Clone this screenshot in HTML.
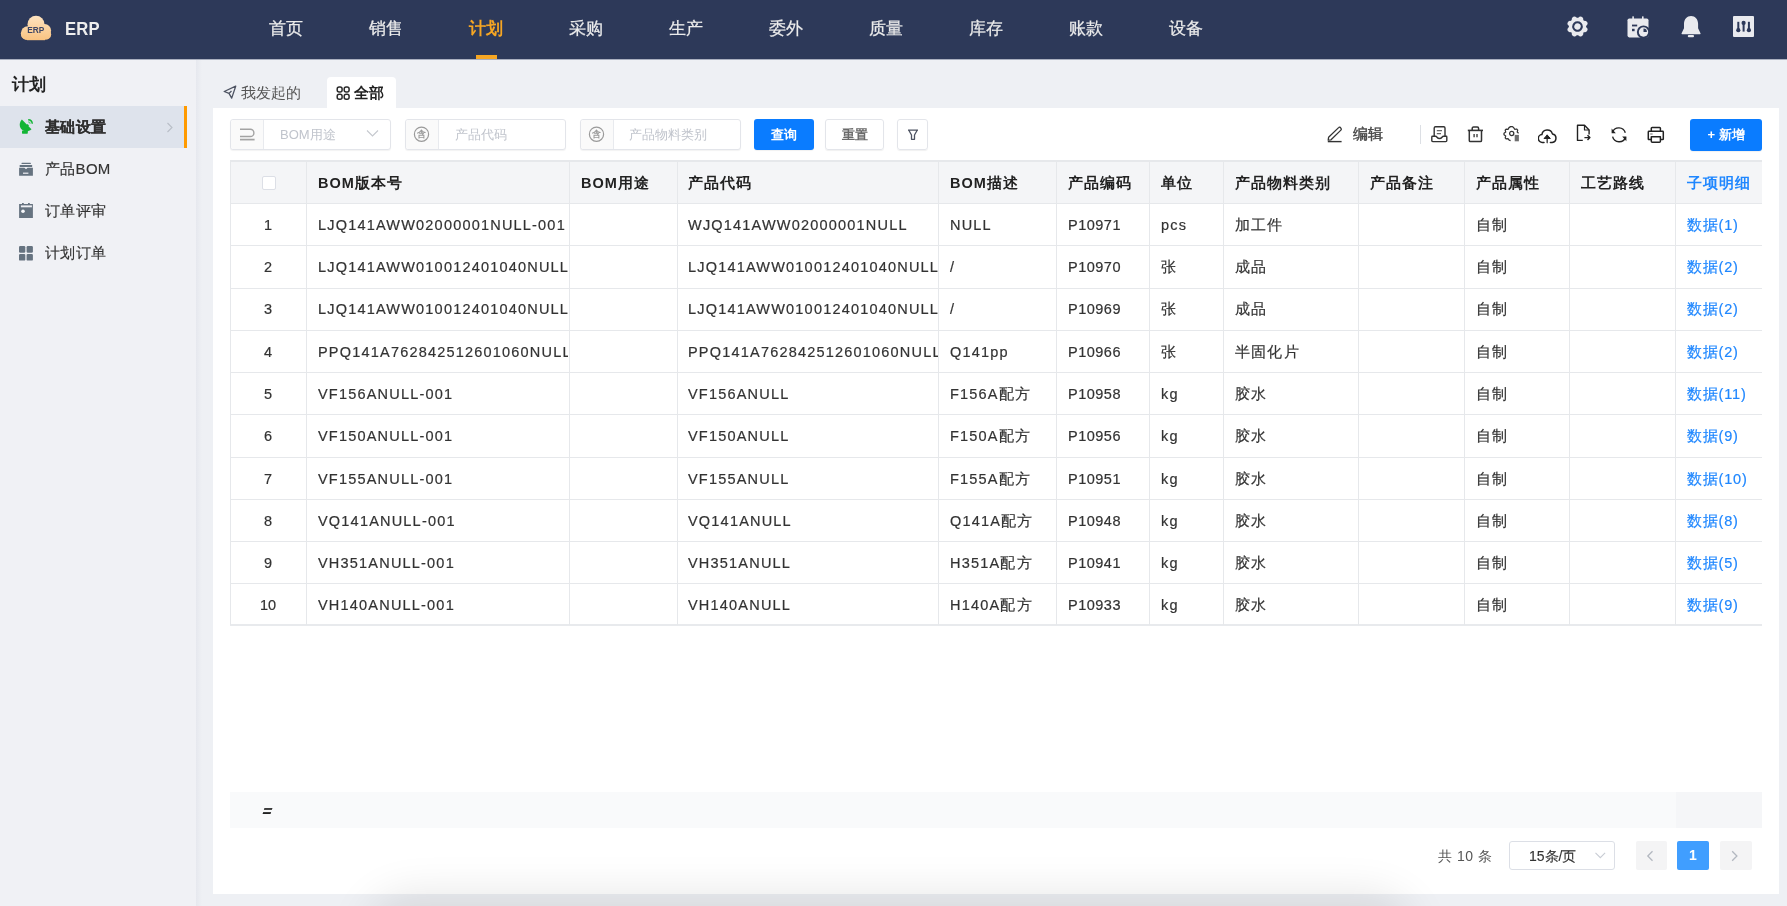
<!DOCTYPE html>
<html><head><meta charset="utf-8">
<style>
*{box-sizing:border-box;margin:0;padding:0}
html,body{width:1787px;height:906px;overflow:hidden}
body{position:relative;background:#eef0f4;will-change:transform;font-family:"Liberation Sans",sans-serif;color:#333}
.abs{position:absolute}
#hdr{left:0;top:0;width:1787px;height:59px;background:#2d3959}
.nav{position:absolute;top:18px;font-size:16.8px;line-height:22px;color:#ececec;white-space:nowrap;-webkit-text-stroke:0.25px #ececec}
.nav.on{color:#f6a623;font-weight:bold;-webkit-text-stroke:0}
#side{left:0;top:59px;width:196px;height:847px;background:#f0f1f5}
.sitem{position:absolute;left:0;width:196px;height:42px}
.sitem .t{position:absolute;left:45px;top:12px;font-size:15px;line-height:18px;color:#333;white-space:nowrap;letter-spacing:0.3px;-webkit-text-stroke:0.15px #333}
#card{left:213px;top:108px;width:1566px;height:786px;background:#fff}
.fbox{position:absolute;top:119px;height:31px;border:1px solid #e3e5ea;border-radius:3px;background:#fff;box-shadow:0 1px 1px rgba(0,0,0,0.05)}
.fbox .pre{position:absolute;left:0;top:0;width:33px;height:29px;background:#fafafa;border-right:1px solid #e8eaee;border-radius:3px 0 0 3px}
.fbox .ph{position:absolute;top:7px;font-size:13px;line-height:15px;color:#c0c4cc;white-space:nowrap}
.btn{position:absolute;top:119px;height:31px;border-radius:3px;font-size:13px;line-height:31px;box-shadow:0 1px 1px rgba(0,0,0,0.06);text-align:center;font-weight:bold;white-space:nowrap}
.hl{position:absolute;left:230px;width:1532px;height:1px;background:#e6e8eb}
.vl{position:absolute;width:1px;background:#e6e8eb}
.c{position:absolute;font-size:14.5px;line-height:18px;color:#333;white-space:nowrap;letter-spacing:1.2px;-webkit-text-stroke:0.2px #333}
.h{position:absolute;top:174px;font-size:14.5px;line-height:18px;color:#222;font-weight:bold;white-space:nowrap;letter-spacing:1px}
.lk{color:#1f87ff}
.clip{overflow:hidden}
.c.lk{-webkit-text-stroke:0.2px #1f87ff;letter-spacing:0.8px}
.ico{position:absolute}
</style></head><body>
<!-- header -->
<div id="hdr" class="abs">
  <svg class="ico" style="left:20px;top:15px" width="33" height="27" viewBox="0 0 33 27">
    <defs><linearGradient id="cg" gradientUnits="userSpaceOnUse" x1="0" y1="0" x2="0" y2="26"><stop offset="0" stop-color="#fde4c2"/><stop offset="1" stop-color="#f9c27f"/></linearGradient></defs>
    <g fill="url(#cg)">
      <circle cx="16" cy="9.3" r="8.5"/>
      <circle cx="24.6" cy="15.6" r="6.5"/>
      <circle cx="7.8" cy="18.2" r="6.9"/>
      <rect x="1" y="14" width="30.2" height="10.8" rx="6.3"/>
      <rect x="7" y="12" width="18" height="13.2"/>
    </g>
    <text x="15.8" y="18.2" font-family="Liberation Sans" font-weight="bold" font-size="8.3" fill="#3c4565" text-anchor="middle" textLength="17" lengthAdjust="spacingAndGlyphs">ERP</text>
  </svg>
  <div class="abs" style="left:65px;top:18px;font-size:18.5px;line-height:21px;font-weight:bold;color:#eee;letter-spacing:0.2px;transform:scaleX(0.9);transform-origin:0 0">ERP</div>
  <div class="nav" style="left:269px">首页</div>
  <div class="nav" style="left:369px">销售</div>
  <div class="nav on" style="left:469px">计划</div>
  <div class="nav" style="left:569px">采购</div>
  <div class="nav" style="left:669px">生产</div>
  <div class="nav" style="left:769px">委外</div>
  <div class="nav" style="left:869px">质量</div>
  <div class="nav" style="left:969px">库存</div>
  <div class="nav" style="left:1069px">账款</div>
  <div class="nav" style="left:1169px">设备</div>

  <svg class="ico" style="left:1567px;top:16px" width="21" height="21" viewBox="0 0 21 21" fill="#e9eaee">
    <g transform="translate(10.5 10.5) rotate(22.5)">
      <circle r="8.6"/>
      <circle cx="0" cy="-7.9" r="2.7"/><circle cx="5.6" cy="-5.6" r="2.7"/><circle cx="7.9" cy="0" r="2.7"/><circle cx="5.6" cy="5.6" r="2.7"/>
      <circle cx="0" cy="7.9" r="2.7"/><circle cx="-5.6" cy="5.6" r="2.7"/><circle cx="-7.9" cy="0" r="2.7"/><circle cx="-5.6" cy="-5.6" r="2.7"/>
      <circle r="5.3" fill="#2d3959"/><circle r="3.2"/>
    </g>
  </svg>
  <svg class="ico" style="left:1627px;top:16px" width="23" height="22" viewBox="0 0 23 22">
    <rect x="0.5" y="2.4" width="21" height="19" rx="1.8" fill="#e9eaee"/>
    <rect x="5.3" y="0.2" width="1.6" height="4" rx="0.6" fill="#e9eaee"/>
    <rect x="15" y="0.2" width="1.6" height="4" rx="0.6" fill="#e9eaee"/>
    <rect x="5" y="8.6" width="5.2" height="1.8" fill="#2d3959"/>
    <rect x="5" y="12.8" width="2.6" height="2.4" fill="#2d3959"/>
    <circle cx="16.5" cy="16" r="6.6" fill="#2d3959"/>
    <circle cx="16.5" cy="16" r="4.7" fill="#e9eaee"/>
    <path d="M16.5 16 L16.5 12.6 A3.4 3.4 0 0 1 19.9 16 Z" fill="#2d3959"/>
  </svg>
  <svg class="ico" style="left:1681px;top:16px" width="21" height="22" viewBox="0 0 21 22" fill="#e9eaee">
    <path d="M0.6 17.3 Q0.2 18.2 1.2 18.2 L18.9 18.2 Q19.9 18.2 19.5 17.3 L17.1 12.2 L17.1 7.8 C17.1 3.3 14.1 0 10.05 0 C6 0 3 3.3 3 7.8 L3 12.2 Z"/>
    <rect x="6.8" y="18.9" width="6.2" height="2.3" rx="1"/>
  </svg>
  <svg class="ico" style="left:1733px;top:16px" width="21" height="21" viewBox="0 0 21 21">
    <rect x="0" y="0" width="21" height="21" rx="1" fill="#e9eaee"/>
    <g fill="#2d3959">
      <rect x="4.3" y="5.8" width="2" height="9.8"/><circle cx="5.3" cy="14.2" r="2.1"/>
      <rect x="9.6" y="5.8" width="2" height="9.8"/><circle cx="10.6" cy="6.9" r="2.1"/>
      <rect x="14.9" y="5.8" width="2" height="9.8"/><circle cx="15.9" cy="14.2" r="2.1"/>
    </g>
  </svg>
  <div class="abs" style="left:476px;top:55px;width:21px;height:4px;background:#f6a623"></div>
</div>

<div class="abs" style="left:0;top:59px;width:1787px;height:1px;background:#a9afbf;z-index:5"></div>
<!-- sidebar -->
<div id="side" class="abs">
  <div class="abs" style="left:12px;top:16px;font-size:17px;line-height:20px;font-weight:bold;color:#222">计划</div>
  <div class="sitem" style="top:47px;width:187px;background:#dee3ec">
    <div class="t" style="font-weight:bold;color:#222">基础设置</div>
    <div class="abs" style="left:184px;top:0;width:3px;height:42px;background:#ff9a00"></div>
  </div>

  <svg class="ico" style="left:19px;top:59px" width="15" height="17" viewBox="0 0 15 17" fill="#12b534">
    <path d="M2.9 1.4 C-0.2 4.5 0 10 3.8 12.3 C6.5 13.9 9.8 13.4 12.5 11.2 Z"/>
    <path d="M6.8 7.8 L8.6 6 L10 7.4 L8.2 9.2 Z"/>
    <rect x="3" y="12.6" width="5.8" height="3.1" rx="0.6"/>
    <path d="M9.2 1 A5 5 0 0 1 14 5.8 L12.6 5.8 A3.6 3.6 0 0 0 9.2 2.4 Z"/>
    <path d="M9.2 3.3 A2.6 2.6 0 0 1 11.8 5.8 L10.6 5.8 A1.4 1.4 0 0 0 9.2 4.5 Z" opacity="0.6"/>
  </svg>
  <svg class="ico" style="left:19px;top:103px" width="14" height="14" viewBox="0 0 14 14" fill="#667380">
    <rect x="2.5" y="0.7" width="9.4" height="1.4" rx="0.5"/>
    <rect x="0.6" y="2.9" width="12.6" height="2" rx="0.4"/>
    <path d="M0.1 5.7 L5.4 5.7 L7 7.2 L8.6 5.7 L13.9 5.7 L13.9 13.7 L0.1 13.7 Z"/>
    <rect x="4" y="10.6" width="5.4" height="1.2" fill="#f0f1f5"/>
  </svg>
  <svg class="ico" style="left:19px;top:144px" width="14" height="15" viewBox="0 0 14 15" fill="#667380">
    <path d="M0.1 0.9 L3 0.9 L3 0 L4.8 0 L4.8 0.9 L9 0.9 L9 0 L10.8 0 L10.8 0.9 L13.9 0.9 L13.9 14.9 L0.1 14.9 Z"/>
    <rect x="1.9" y="2.4" width="11" height="1.9" fill="#f0f1f5"/>
    <circle cx="4" cy="8.3" r="1.8" fill="#f8f9fb"/>
  </svg>
  <svg class="ico" style="left:19px;top:187px" width="14" height="15" viewBox="0 0 14 15" fill="#667380">
    <rect x="0" y="0" width="6.3" height="6.7" rx="1.2"/><rect x="7.6" y="0" width="6.3" height="6.7" rx="1.2"/>
    <rect x="0" y="7.9" width="6.3" height="6.7" rx="1.2"/><rect x="7.6" y="7.9" width="6.3" height="6.7" rx="1.2"/>
  </svg>
  <svg class="ico" style="left:166px;top:63px" width="8" height="11" viewBox="0 0 8 11"><path d="M1.5 1 L6 5.5 L1.5 10" fill="none" stroke="#b9bec7" stroke-width="1.1"/></svg>
  <div class="sitem" style="top:89px"><div class="t">产品BOM</div></div>
  <div class="sitem" style="top:131px"><div class="t">订单评审</div></div>
  <div class="sitem" style="top:173px"><div class="t">计划订单</div></div>
</div>
<div class="abs" style="left:196px;top:59px;width:6px;height:847px;background:linear-gradient(to right,#e6e8ee,#eef0f4)"></div>

<!-- tabs -->
<div class="abs" style="left:327px;top:77px;width:69px;height:32px;background:#fff;border-radius:4px 4px 0 0"></div>

<svg class="ico" style="left:223px;top:85px" width="15" height="15" viewBox="0 0 15 15" fill="none" stroke="#4d5362" stroke-width="1.3" stroke-linejoin="round">
  <path d="M12.7 1.2 L1.2 6.5 L6 8.4 L8.7 13.1 Z"/><path d="M6 8.4 L8.5 6"/>
</svg>
<svg class="ico" style="left:336px;top:86px" width="15" height="15" viewBox="0 0 15 15" fill="none" stroke="#2a2a2a" stroke-width="1.5">
  <rect x="1.2" y="1.1" width="4.9" height="5" rx="2"/><rect x="8.2" y="1.1" width="4.9" height="5" rx="2"/>
  <rect x="1.2" y="8.2" width="4.9" height="5" rx="2"/><rect x="8.2" y="8.2" width="4.9" height="5" rx="2"/>
</svg>
<div class="abs" style="left:241px;top:84px;font-size:14.5px;line-height:18px;color:#555;white-space:nowrap">我发起的</div>
<div class="abs" style="left:354px;top:84px;font-size:14.5px;line-height:18px;color:#222;font-weight:bold;white-space:nowrap">全部</div>

<!-- card -->
<div id="card" class="abs"></div>

<!-- filters -->
<div class="fbox" style="left:230px;width:161px"><div class="pre"></div><div class="ph" style="left:49px">BOM用途</div></div>
<div class="fbox" style="left:405px;width:161px"><div class="pre"></div><div class="ph" style="left:49px">产品代码</div></div>
<div class="fbox" style="left:580px;width:161px"><div class="pre"></div><div class="ph" style="left:48px">产品物料类别</div></div>

<svg class="ico" style="left:239px;top:127px" width="17" height="15" viewBox="0 0 17 15" fill="none" stroke="#a3a3a3" stroke-width="1.4">
  <path d="M1 2.3 L11.3 2.3 A3.6 3.6 0 0 1 11.3 9.5 L1 9.5"/><path d="M1 12.6 L15.6 12.6" stroke-width="1.7"/>
</svg>
<svg class="ico" style="left:413px;top:126px" width="17" height="17" viewBox="0 0 17 17">
  <circle cx="8.5" cy="8.2" r="7.1" fill="none" stroke="#9a9a9a" stroke-width="1.2"/>
  <text x="8.5" y="11.4" font-size="8.5" font-weight="bold" fill="#9a9a9a" text-anchor="middle" font-family="Liberation Sans">含</text>
</svg>
<svg class="ico" style="left:588px;top:126px" width="17" height="17" viewBox="0 0 17 17">
  <circle cx="8.5" cy="8.2" r="7.1" fill="none" stroke="#9a9a9a" stroke-width="1.2"/>
  <text x="8.5" y="11.4" font-size="8.5" font-weight="bold" fill="#9a9a9a" text-anchor="middle" font-family="Liberation Sans">含</text>
</svg>
<svg class="ico" style="left:366px;top:129px" width="13" height="9" viewBox="0 0 13 9" fill="none" stroke="#c5c8ce" stroke-width="1.1"><path d="M1 1.5 L6.5 7 L12 1.5"/></svg>
<svg class="ico" style="left:907px;top:129px" width="12" height="12" viewBox="0 0 12 12" fill="none" stroke="#4d5362" stroke-width="1.3" stroke-linejoin="round">
  <path d="M1 1.2 L11 1.2 M1.8 1.2 L4.5 6 L4.5 10.3 L7.5 10.3 L7.5 6 L10.2 1.2"/>
</svg>
<div class="btn" style="left:754px;width:60px;background:#0a7cff;color:#fff">查询</div>
<div class="btn" style="left:825px;width:59px;border:1px solid #e3e5ea;color:#6a6a6a;line-height:30px">重置</div>
<div class="btn" style="left:897px;width:31px;border:1px solid #e3e5ea"></div>

<!-- toolbar right -->
<div class="abs" style="left:1353px;top:125px;font-size:15px;line-height:18px;color:#4a4a4a;white-space:nowrap;-webkit-text-stroke:0.45px #4a4a4a">编辑</div>
<div class="abs" style="left:1420px;top:125px;width:1px;height:19px;background:#dcdfe4"></div>

<svg class="ico" style="left:1327px;top:126px" width="17" height="17" viewBox="0 0 17 17" fill="none" stroke="#333" stroke-width="1.3" stroke-linejoin="round">
  <path d="M1.6 11.3 L11.6 1.6 A1.2 1.2 0 0 1 13.6 1.9 L14 2.4 A1.2 1.2 0 0 1 13.9 4.1 L4 13.8 L1.2 14.1 Z"/>
  <path d="M0.8 15.6 L14.6 15.6" stroke-width="1.4"/>
</svg>
<svg class="ico" style="left:1431px;top:126px" width="17" height="17" viewBox="0 0 17 17" fill="none" stroke="#333" stroke-width="1.4" stroke-linejoin="round">
  <path d="M3.2 10 L3.2 2 A1.3 1.3 0 0 1 4.5 0.8 L12.8 0.8 A1.3 1.3 0 0 1 14 2 L14 10"/>
  <path d="M5.8 4.6 L11 4.6 M5.8 7.6 L10 7.6" stroke="#666" stroke-width="1.2"/>
  <path d="M1.5 10.3 L4.4 10.3 Q5.3 10.3 6 11.2 Q7 12.5 8.5 12.5 Q10 12.5 11 11.2 Q11.7 10.3 12.6 10.3 L15.3 10.3 Q15.8 10.3 15.8 11 L15.8 14.6 Q15.8 15.6 14.8 15.6 L1.8 15.6 Q0.8 15.6 0.8 14.6 L0.8 11 Q0.8 10.3 1.5 10.3 Z"/>
</svg>
<svg class="ico" style="left:1467px;top:126px" width="17" height="17" viewBox="0 0 17 17" fill="none" stroke="#333" stroke-width="1.5" stroke-linejoin="round">
  <path d="M5.2 4.2 L5.2 2.4 Q5.2 1.1 6.5 1.1 L10.3 1.1 Q11.6 1.1 11.6 2.4 L11.6 4.2"/>
  <path d="M0.8 4.4 L16 4.4" stroke-width="1.6"/>
  <path d="M2.3 4.4 L2.3 14.5 Q2.3 15.6 3.4 15.6 L13.4 15.6 Q14.5 15.6 14.5 14.5 L14.5 4.4"/>
  <path d="M7.1 8 L7.1 11.3 M10 8 L10 11.3" stroke-width="1.3"/>
</svg>
<svg class="ico" style="left:1503px;top:125px" width="17" height="17" viewBox="0 0 17 17" fill="none" stroke="#333" stroke-width="1.25" stroke-linejoin="round">
  <path d="M7.6 15.6 L6.2 15.2 L5 13.6 L3.1 13.9 L2.2 12.8 L2.7 10.9 L1 9.8 L1 8.2 L2.7 7.1 L2.2 5.2 L3.1 4.1 L5 4.4 L6 2.6 L7.6 1.6 L9.2 1.6 L10.6 2.6 L11.9 4.3 L13.8 4 L14.7 5.2 L14.2 7.1 L15.6 8.2"/>
  <circle cx="8.7" cy="8.5" r="2.1"/>
  <rect x="11.7" y="9.9" width="4.2" height="6.4" fill="#6e6e6e" stroke="none"/>
</svg>
<svg class="ico" style="left:1538px;top:127px" width="19" height="17" viewBox="0 0 19 17" fill="none" stroke="#222" stroke-width="1.5" stroke-linejoin="round" stroke-linecap="round">
  <path d="M6 15.4 L4.6 15.4 A3.9 3.9 0 0 1 3.9 7.6 A5.4 5.4 0 0 1 14.4 6.9 A4.3 4.3 0 0 1 14.2 15.4 L12.4 15.4"/>
  <path d="M9.2 15.6 L9.2 8.3" stroke="#555" stroke-width="1.6"/>
  <path d="M6.3 11.2 L9.2 8 L12.1 11.2 Z" fill="#222" stroke-width="1"/>
</svg>
<svg class="ico" style="left:1576px;top:124px" width="16" height="18" viewBox="0 0 16 18" fill="none" stroke="#222" stroke-width="1.4" stroke-linejoin="round">
  <path d="M13.1 10.4 L13.1 6 L8.5 1.2 L1.5 1.2 L1.5 16.4 L6.8 16.4"/>
  <path d="M8.5 1.2 L8.5 6 L13.1 6" stroke-width="1.2"/>
  <path d="M8.4 13.6 L13.8 13.6 M11.5 11.2 L13.9 13.6 L11.5 16" stroke-width="1.4"/>
</svg>
<svg class="ico" style="left:1610px;top:126px" width="18" height="18" viewBox="0 0 18 18" fill="none" stroke="#222" stroke-width="1.4">
  <path d="M2.4 6.2 A6.8 6.8 0 0 1 15.3 6.8"/>
  <path d="M15.6 11.2 A6.8 6.8 0 0 1 2.6 10.6"/>
  <path d="M1.6 2.6 L1.6 7.2 L5.8 7.2 Z" fill="#222" stroke="none"/>
  <path d="M16.4 15.2 L16.4 10.6 L12.2 10.6 Z" fill="#222" stroke="none"/>
</svg>
<svg class="ico" style="left:1647px;top:126px" width="18" height="18" viewBox="0 0 18 18" fill="none" stroke="#222" stroke-width="1.5" stroke-linejoin="round">
  <path d="M4.3 5.2 L4.3 2.2 Q4.3 1.4 5.1 1.4 L12.6 1.4 Q13.4 1.4 13.4 2.2 L13.4 5.2"/>
  <path d="M4.3 13.6 L2 13.6 Q1.3 13.6 1.3 12.9 L1.3 6 Q1.3 5.3 2 5.3 L15.6 5.3 Q16.3 5.3 16.3 6 L16.3 12.9 Q16.3 13.6 15.6 13.6 L13.4 13.6"/>
  <path d="M4.3 10.7 L13.4 10.7 L13.4 15.3 Q13.4 16.3 12.4 16.3 L5.3 16.3 Q4.3 16.3 4.3 15.3 Z"/>
  <path d="M3.2 8 L5.6 8" stroke-width="1.1" stroke="#777"/>
</svg>
<div class="btn" style="left:1690px;width:72px;top:119px;height:32px;background:#0a7cff;color:#fff;line-height:31px">+ 新增</div>

<!-- table -->
<div class="abs" style="left:230px;top:161px;width:1532px;height:42px;background:#f4f5f7"></div>
<div class="hl" style="top:160px;height:2px"></div>
<div class="hl" style="top:203px"></div>
<div class="hl" style="top:245px"></div>
<div class="hl" style="top:288px"></div>
<div class="hl" style="top:330px"></div>
<div class="hl" style="top:372px"></div>
<div class="hl" style="top:414px"></div>
<div class="hl" style="top:457px"></div>
<div class="hl" style="top:499px"></div>
<div class="hl" style="top:541px"></div>
<div class="hl" style="top:583px"></div>
<div class="hl" style="top:624px;height:2px;background:#e8eaed"></div>
<div class="vl" style="left:230px;top:160px;height:465px"></div>
<div class="vl" style="left:306px;top:160px;height:465px"></div>
<div class="vl" style="left:569px;top:160px;height:465px"></div>
<div class="vl" style="left:677px;top:160px;height:465px"></div>
<div class="vl" style="left:938px;top:160px;height:465px"></div>
<div class="vl" style="left:1056px;top:160px;height:465px"></div>
<div class="vl" style="left:1149px;top:160px;height:465px"></div>
<div class="vl" style="left:1223px;top:160px;height:465px"></div>
<div class="vl" style="left:1358px;top:160px;height:465px"></div>
<div class="vl" style="left:1464px;top:160px;height:465px"></div>
<div class="vl" style="left:1569px;top:160px;height:465px"></div>
<div class="vl" style="left:1675px;top:160px;height:465px"></div>

<div class="abs" style="left:262px;top:176px;width:14px;height:14px;border:1px solid #dcdfe6;border-radius:2px;background:#fff"></div>
<div class="h" style="left:318px">BOM版本号</div>
<div class="h" style="left:581px">BOM用途</div>
<div class="h" style="left:688px">产品代码</div>
<div class="h" style="left:950px">BOM描述</div>
<div class="h" style="left:1068px">产品编码</div>
<div class="h" style="left:1161px">单位</div>
<div class="h" style="left:1235px">产品物料类别</div>
<div class="h" style="left:1370px">产品备注</div>
<div class="h" style="left:1476px">产品属性</div>
<div class="h" style="left:1581px">工艺路线</div>
<div class="h lk" style="left:1687px">子项明细</div>

<!--ROWS--><div id="rows">
<div class="c" style="left:230px;width:76px;text-align:center;top:216px;letter-spacing:0">1</div>
<div class="c clip" style="left:318px;top:216px;width:250px">LJQ141AWW02000001NULL-001</div>
<div class="c clip" style="left:688px;top:216px;width:250px">WJQ141AWW02000001NULL</div>
<div class="c" style="left:950px;top:216px">NULL</div>
<div class="c" style="left:1068px;top:216px;letter-spacing:0.5px">P10971</div>
<div class="c" style="left:1161px;top:216px">pcs</div>
<div class="c" style="left:1235px;top:216px">加工件</div>
<div class="c" style="left:1476px;top:216px">自制</div>
<div class="c lk" style="left:1687px;top:216px">数据(1)</div>
<div class="c" style="left:230px;width:76px;text-align:center;top:258px;letter-spacing:0">2</div>
<div class="c clip" style="left:318px;top:258px;width:250px">LJQ141AWW010012401040NULL</div>
<div class="c clip" style="left:688px;top:258px;width:250px">LJQ141AWW010012401040NULL</div>
<div class="c" style="left:950px;top:258px">/</div>
<div class="c" style="left:1068px;top:258px;letter-spacing:0.5px">P10970</div>
<div class="c" style="left:1161px;top:258px">张</div>
<div class="c" style="left:1235px;top:258px">成品</div>
<div class="c" style="left:1476px;top:258px">自制</div>
<div class="c lk" style="left:1687px;top:258px">数据(2)</div>
<div class="c" style="left:230px;width:76px;text-align:center;top:300px;letter-spacing:0">3</div>
<div class="c clip" style="left:318px;top:300px;width:250px">LJQ141AWW010012401040NULL</div>
<div class="c clip" style="left:688px;top:300px;width:250px">LJQ141AWW010012401040NULL</div>
<div class="c" style="left:950px;top:300px">/</div>
<div class="c" style="left:1068px;top:300px;letter-spacing:0.5px">P10969</div>
<div class="c" style="left:1161px;top:300px">张</div>
<div class="c" style="left:1235px;top:300px">成品</div>
<div class="c" style="left:1476px;top:300px">自制</div>
<div class="c lk" style="left:1687px;top:300px">数据(2)</div>
<div class="c" style="left:230px;width:76px;text-align:center;top:343px;letter-spacing:0">4</div>
<div class="c clip" style="left:318px;top:343px;width:250px">PPQ141A762842512601060NULL</div>
<div class="c clip" style="left:688px;top:343px;width:250px">PPQ141A762842512601060NULL</div>
<div class="c" style="left:950px;top:343px">Q141pp</div>
<div class="c" style="left:1068px;top:343px;letter-spacing:0.5px">P10966</div>
<div class="c" style="left:1161px;top:343px">张</div>
<div class="c" style="left:1235px;top:343px">半固化片</div>
<div class="c" style="left:1476px;top:343px">自制</div>
<div class="c lk" style="left:1687px;top:343px">数据(2)</div>
<div class="c" style="left:230px;width:76px;text-align:center;top:385px;letter-spacing:0">5</div>
<div class="c clip" style="left:318px;top:385px;width:250px">VF156ANULL-001</div>
<div class="c clip" style="left:688px;top:385px;width:250px">VF156ANULL</div>
<div class="c" style="left:950px;top:385px">F156A配方</div>
<div class="c" style="left:1068px;top:385px;letter-spacing:0.5px">P10958</div>
<div class="c" style="left:1161px;top:385px">kg</div>
<div class="c" style="left:1235px;top:385px">胶水</div>
<div class="c" style="left:1476px;top:385px">自制</div>
<div class="c lk" style="left:1687px;top:385px">数据(11)</div>
<div class="c" style="left:230px;width:76px;text-align:center;top:427px;letter-spacing:0">6</div>
<div class="c clip" style="left:318px;top:427px;width:250px">VF150ANULL-001</div>
<div class="c clip" style="left:688px;top:427px;width:250px">VF150ANULL</div>
<div class="c" style="left:950px;top:427px">F150A配方</div>
<div class="c" style="left:1068px;top:427px;letter-spacing:0.5px">P10956</div>
<div class="c" style="left:1161px;top:427px">kg</div>
<div class="c" style="left:1235px;top:427px">胶水</div>
<div class="c" style="left:1476px;top:427px">自制</div>
<div class="c lk" style="left:1687px;top:427px">数据(9)</div>
<div class="c" style="left:230px;width:76px;text-align:center;top:470px;letter-spacing:0">7</div>
<div class="c clip" style="left:318px;top:470px;width:250px">VF155ANULL-001</div>
<div class="c clip" style="left:688px;top:470px;width:250px">VF155ANULL</div>
<div class="c" style="left:950px;top:470px">F155A配方</div>
<div class="c" style="left:1068px;top:470px;letter-spacing:0.5px">P10951</div>
<div class="c" style="left:1161px;top:470px">kg</div>
<div class="c" style="left:1235px;top:470px">胶水</div>
<div class="c" style="left:1476px;top:470px">自制</div>
<div class="c lk" style="left:1687px;top:470px">数据(10)</div>
<div class="c" style="left:230px;width:76px;text-align:center;top:512px;letter-spacing:0">8</div>
<div class="c clip" style="left:318px;top:512px;width:250px">VQ141ANULL-001</div>
<div class="c clip" style="left:688px;top:512px;width:250px">VQ141ANULL</div>
<div class="c" style="left:950px;top:512px">Q141A配方</div>
<div class="c" style="left:1068px;top:512px;letter-spacing:0.5px">P10948</div>
<div class="c" style="left:1161px;top:512px">kg</div>
<div class="c" style="left:1235px;top:512px">胶水</div>
<div class="c" style="left:1476px;top:512px">自制</div>
<div class="c lk" style="left:1687px;top:512px">数据(8)</div>
<div class="c" style="left:230px;width:76px;text-align:center;top:554px;letter-spacing:0">9</div>
<div class="c clip" style="left:318px;top:554px;width:250px">VH351ANULL-001</div>
<div class="c clip" style="left:688px;top:554px;width:250px">VH351ANULL</div>
<div class="c" style="left:950px;top:554px">H351A配方</div>
<div class="c" style="left:1068px;top:554px;letter-spacing:0.5px">P10941</div>
<div class="c" style="left:1161px;top:554px">kg</div>
<div class="c" style="left:1235px;top:554px">胶水</div>
<div class="c" style="left:1476px;top:554px">自制</div>
<div class="c lk" style="left:1687px;top:554px">数据(5)</div>
<div class="c" style="left:230px;width:76px;text-align:center;top:596px;letter-spacing:0">10</div>
<div class="c clip" style="left:318px;top:596px;width:250px">VH140ANULL-001</div>
<div class="c clip" style="left:688px;top:596px;width:250px">VH140ANULL</div>
<div class="c" style="left:950px;top:596px">H140A配方</div>
<div class="c" style="left:1068px;top:596px;letter-spacing:0.5px">P10933</div>
<div class="c" style="left:1161px;top:596px">kg</div>
<div class="c" style="left:1235px;top:596px">胶水</div>
<div class="c" style="left:1476px;top:596px">自制</div>
<div class="c lk" style="left:1687px;top:596px">数据(9)</div>
</div><!--/ROWS-->

<!-- summary -->
<div class="abs" style="left:230px;top:792px;width:1532px;height:36px;background:#f9fafb"></div>
<div class="abs" style="left:1676px;top:792px;width:86px;height:36px;background:#f5f6f8"></div>
<div class="abs" style="left:263px;top:802px;font-size:15px;line-height:18px;font-weight:bold;color:#222;-webkit-text-stroke:0.4px #222;transform:skewX(-18deg)">=</div>

<!-- pagination -->
<div class="abs" style="left:1438px;top:847px;font-size:14px;line-height:18px;color:#555;white-space:nowrap;letter-spacing:0.5px">共 10 条</div>
<div class="abs" style="left:1509px;top:841px;width:106px;height:29px;border:1px solid #dcdfe6;border-radius:3px"></div>
<div class="abs" style="left:1529px;top:847px;font-size:14px;line-height:18px;color:#333;white-space:nowrap;-webkit-text-stroke:0.12px #333">15条/页</div>
<div class="abs" style="left:1636px;top:841px;width:31px;height:29px;background:#f4f4f5;border-radius:2px"></div>
<div class="abs" style="left:1677px;top:841px;width:32px;height:29px;background:#409eff;border-radius:2px;color:#fff;font-weight:bold;font-size:14px;line-height:29px;text-align:center">1</div>
<div class="abs" style="left:1720px;top:841px;width:32px;height:29px;background:#f4f4f5;border-radius:2px"></div>
<svg class="ico" style="left:1594px;top:851px" width="13" height="9" viewBox="0 0 13 9" fill="none" stroke="#c8ccd4" stroke-width="1.1"><path d="M1.5 1.8 L6.3 6.6 L11.1 1.8"/></svg>
<svg class="ico" style="left:1645px;top:850px" width="10" height="12" viewBox="0 0 10 12" fill="none" stroke="#b3b8c0" stroke-width="1.3"><path d="M7.5 1.2 L2.8 6 L7.5 10.8"/></svg>
<svg class="ico" style="left:1730px;top:850px" width="10" height="12" viewBox="0 0 10 12" fill="none" stroke="#b3b8c0" stroke-width="1.3"><path d="M2.2 1.2 L6.9 6 L2.2 10.8"/></svg>
<div class="abs" style="left:390px;top:918px;width:1000px;height:40px;border-radius:20px;background:#000;box-shadow:0 0 45px 22px rgba(0,0,0,0.11)"></div>
</body></html>
